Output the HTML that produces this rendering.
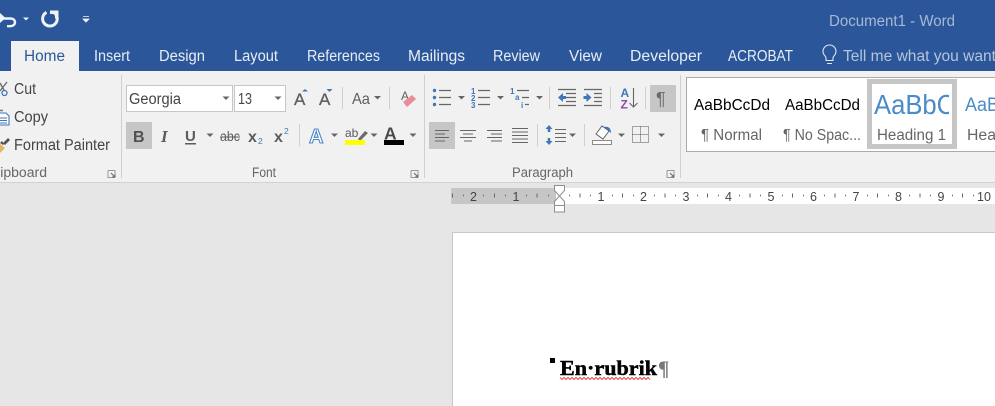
<!DOCTYPE html>
<html><head><meta charset="utf-8"><style>
html,body{margin:0;padding:0;width:995px;height:406px;overflow:hidden;background:#e6e6e6}
svg{display:block;font-family:"Liberation Sans",sans-serif}
.tab{font-size:15.500px;fill:#e8edf5}
.r{font-size:15.500px;fill:#444}
.g{font-size:13.500px;fill:#666}
.n{font-size:12.500px;fill:#444}
.s{font-size:15.500px;fill:#666}
</style></head><body>
<svg width="995" height="406" viewBox="0 0 995 406" xmlns="http://www.w3.org/2000/svg">
<defs>
<clipPath id="hc"><rect x="872" y="84" width="77" height="40"/></clipPath>
<path id="caret" d="M0 0h7l-3.500 3.500z" fill="#666"/>
</defs>
<!-- title bar -->
<rect width="995" height="71" fill="#2b579a"/>
<path d="M0 13v10l5.500-5z" fill="#f0f3f8"/>
<path d="M3 18.500h7c3.500 0 5 1.800 5 3.800s-1.700 3.900-5 3.900H7" fill="none" stroke="#f0f3f8" stroke-width="2.400"/>
<path d="M23 17.500h6l-3 3z" fill="#f0f3f8"/>
<path d="M46.500 12.300a7.300 7.300 0 1 0 7.800 .6" fill="none" stroke="#f0f3f8" stroke-width="3"/>
<path d="M50 10.500h8.500v8h-3.500v-4.500h-5z" fill="#f0f3f8"/>
<path d="M83 16.500h6M83 19h6l-3 3z" fill="#f0f3f8" stroke="#f0f3f8" stroke-width=".8"/>
<text x="829" y="26" font-size="15.500" fill="#a5b8d5" textLength="126" lengthAdjust="spacingAndGlyphs">Document1 - Word</text>
<!-- tabs -->
<rect x="11" y="41" width="68" height="30" fill="#f1f1f1"/>
<text x="24" y="61" font-size="15.500" fill="#2b579a" textLength="41" lengthAdjust="spacingAndGlyphs">Home</text>
<text class="tab" x="94" y="61" textLength="36" lengthAdjust="spacingAndGlyphs">Insert</text>
<text class="tab" x="159" y="61" textLength="46" lengthAdjust="spacingAndGlyphs">Design</text>
<text class="tab" x="234" y="61" textLength="44" lengthAdjust="spacingAndGlyphs">Layout</text>
<text class="tab" x="307" y="61" textLength="73" lengthAdjust="spacingAndGlyphs">References</text>
<text class="tab" x="408" y="61" textLength="57" lengthAdjust="spacingAndGlyphs">Mailings</text>
<text class="tab" x="493" y="61" textLength="47" lengthAdjust="spacingAndGlyphs">Review</text>
<text class="tab" x="569" y="61" textLength="33" lengthAdjust="spacingAndGlyphs">View</text>
<text class="tab" x="630" y="61" textLength="72" lengthAdjust="spacingAndGlyphs">Developer</text>
<text class="tab" x="728" y="61" textLength="65" lengthAdjust="spacingAndGlyphs">ACROBAT</text>
<path d="M826 60.500v-2.500c0-2-3-3-3-6.500a6.500 6.500 0 0 1 13 0c0 3.500-3 4.500-3 6.500v2.500zM827 63.500h5" fill="none" stroke="#dfe6f0" stroke-width="1.100"/>
<text x="843" y="61" font-size="15.500" fill="#b4c4dc" textLength="153" lengthAdjust="spacingAndGlyphs">Tell me what you want</text>
<!-- ribbon -->
<rect y="71" width="995" height="111" fill="#f1f1f1"/>
<rect y="182" width="995" height="1" fill="#d2d2d2"/>
<rect x="121" y="75" width="1" height="103" fill="#cfcfcf"/>
<rect x="424" y="75" width="1" height="103" fill="#cfcfcf"/>
<rect x="680" y="75" width="1" height="103" fill="#cfcfcf"/>
<!-- clipboard -->
<path d="M0 83l4.500 8M7 82l-7 9" stroke="#666" stroke-width="1.300" fill="none"/>
<circle cx="4.500" cy="93" r="2.500" fill="none" stroke="#3f77b8" stroke-width="1.300"/>
<text class="r" x="14" y="94" textLength="22" lengthAdjust="spacingAndGlyphs">Cut</text>
<path d="M0 113h6l3 3v9H0" fill="#fff" stroke="#3f77b8" stroke-width="1.100"/>
<path d="M0 118h7M0 120.500h7M0 123h7" stroke="#3f77b8" stroke-width="1"/>
<path d="M0 110.500h3" stroke="#777" stroke-width="1.500"/>
<text class="r" x="14" y="122" textLength="34" lengthAdjust="spacingAndGlyphs">Copy</text>
<path d="M0 144l5 4-5 5z" fill="#e4b461"/>
<path d="M0 143l2-2 2 3-1 1zM3 143l5-5 2 2-5 5z" fill="#555"/>
<text class="r" x="14" y="150" textLength="96" lengthAdjust="spacingAndGlyphs">Format Painter</text>
<text class="g" x="-13" y="177" textLength="60" lengthAdjust="spacingAndGlyphs">Clipboard</text>
<g id="launch"><path d="M108 170.500h7v7M108 170.500v7h7" fill="none" stroke="#999"/><path d="M111 173l3.500 3.500M112 177h3v-3" stroke="#666" fill="none"/></g>
<!-- font -->
<rect x="126.500" y="85.500" width="106" height="26" fill="#fff" stroke="#c6c6c6"/>
<rect x="234.500" y="85.500" width="51" height="26" fill="#fff" stroke="#c6c6c6"/>
<text x="129" y="104" font-size="15.500" fill="#444" textLength="52" lengthAdjust="spacingAndGlyphs">Georgia</text>
<text x="238" y="104" font-size="15.500" fill="#444" textLength="14" lengthAdjust="spacingAndGlyphs">13</text>
<use href="#caret" x="222.500" y="96.500"/><use href="#caret" x="274.500" y="96.500"/>
<text x="294" y="105" font-size="17" fill="#5f5f5f" stroke="#5f5f5f" stroke-width=".3">A</text>
<path d="M302 91.500h6l-3-2.500z" fill="#3f77b8"/>
<text x="319" y="105" font-size="17" fill="#5f5f5f" stroke="#5f5f5f" stroke-width=".3">A</text>
<path d="M326.500 89h6l-3 3z" fill="#3f77b8"/>
<rect x="342" y="87" width="1" height="22" fill="#cfcfcf"/>
<text x="352" y="104" font-size="16" fill="#5f5f5f" textLength="18" lengthAdjust="spacingAndGlyphs">Aa</text>
<use href="#caret" x="374" y="96"/>
<rect x="389" y="87" width="1" height="22" fill="#cfcfcf"/>
<text x="401" y="100" font-size="12" fill="#5f5f5f">A</text>
<path d="M403 102l9-7 4 4-9 8z" fill="#ec8a98"/>
<rect x="126" y="122" width="26" height="27" fill="#c6c6c6"/>
<text x="133" y="142" font-size="16" font-weight="700" fill="#505050">B</text>
<text x="161" y="142" font-size="17" font-weight="700" font-style="italic" font-family="Liberation Serif" fill="#5c5c5c">I</text>
<text x="185" y="141" font-size="15" font-weight="700" fill="#5c5c5c">U</text>
<rect x="185" y="143" width="11" height="1.500" fill="#5c5c5c"/>
<use href="#caret" x="206.500" y="133.500"/>
<text x="220" y="141" font-size="13.500" fill="#5c5c5c" textLength="20" lengthAdjust="spacingAndGlyphs">abc</text>
<rect x="220" y="136.500" width="20" height="1" fill="#5c5c5c"/>
<text x="248" y="142" font-size="16" font-weight="700" fill="#5c5c5c">x</text>
<text x="258" y="144" font-size="8.500" fill="#3f77b8">2</text>
<text x="274" y="142" font-size="16" font-weight="700" fill="#5c5c5c">x</text>
<text x="284" y="134" font-size="8.500" fill="#3f77b8">2</text>
<rect x="299" y="124" width="1" height="22" fill="#cfcfcf"/>
<text x="309" y="143" font-size="20" font-weight="700" fill="#fff" stroke="#4a86c8" stroke-width="1.100">A</text>
<use href="#caret" x="331" y="133.500"/>
<text x="345" y="137" font-size="12" fill="#5a5a5a">ab</text>
<path d="M358 139l7-8 3 2-8 8z" fill="#6a6a6a"/>
<rect x="345" y="140" width="20" height="5" fill="#ff0"/>
<use href="#caret" x="370.500" y="133.500"/>
<text x="384" y="139.500" font-size="17.500" font-weight="700" fill="#4a4a4a">A</text>
<rect x="384" y="140" width="20" height="5" fill="#000"/>
<use href="#caret" x="409.500" y="133.500"/>
<text class="g" x="252" y="177" textLength="24" lengthAdjust="spacingAndGlyphs">Font</text>
<use href="#launch" x="303"/>
<!-- paragraph row 1 -->
<g fill="#3f77b8"><circle cx="434.500" cy="90.500" r="1.700"/><circle cx="434.500" cy="97.500" r="1.700"/><circle cx="434.500" cy="104.500" r="1.700"/></g>
<path d="M439 90.500h12M439 97.500h12M439 104.500h12M478 90.500h12M478 97.500h12M478 104.500h12M517 90.500h12M522 97.500h7M525 104.500h4" stroke="#666" stroke-width="1.200"/>
<use href="#caret" x="458" y="96"/><use href="#caret" x="497" y="96"/><use href="#caret" x="536" y="96"/>
<g font-size="8" font-weight="700" fill="#3f77b8"><text x="471" y="94">1</text><text x="471" y="101">2</text><text x="471" y="108">3</text><text x="510" y="94">1</text><text x="515" y="100">a</text><text x="521" y="108">i</text></g>
<rect x="549" y="87" width="1" height="22" fill="#cfcfcf"/>
<path d="M558 89.500h18M566 93.500h10M566 97.500h10M566 101.500h10M558 105.500h18M584 89.500h18M594 93.500h8M594 97.500h8M594 101.500h8M584 105.500h18" stroke="#666" stroke-width="1.200"/>
<path d="M558 97.500l5-4.500v3h3v3h-3v3zM591.500 97.500l-5-4.500v3h-3v3h3v3z" fill="#3f77b8"/>
<rect x="610" y="87" width="1" height="22" fill="#cfcfcf"/>
<text x="620.500" y="97" font-size="12" font-weight="700" fill="#3f77b8">A</text>
<text x="620.500" y="108.500" font-size="12" font-weight="700" fill="#8a4fa8">Z</text>
<path d="M633.500 88v19M629.500 103l4 4 4-4" fill="none" stroke="#666" stroke-width="1.100"/>
<rect x="645" y="87" width="1" height="22" fill="#cfcfcf"/>
<rect x="650" y="85" width="26" height="27" fill="#c6c6c6"/>
<text x="656" y="105" font-size="18" fill="#6a6a6a">¶</text>
<!-- paragraph row 2 -->
<rect x="429" y="122" width="26" height="27" fill="#c6c6c6"/>
<path d="M435 130.500h14M435 134h10M435 137.500h14M435 141h10M460 130.500h16M463 134h10M460 137.500h16M464 141h8M487 130.500h15M491 134h11M487 137.500h15M491 141h11M512 128.500h16M512 132h16M512 135.500h16M512 139h16M512 142.500h16" stroke="#666" stroke-width="1.100"/>
<rect x="537" y="124" width="1" height="22" fill="#cfcfcf"/>
<path d="M549 125l-3.500 4h7zM549 145l-3.500-4h7z" fill="#3f77b8"/>
<path d="M549 128v4M549 138v4" stroke="#3f77b8" stroke-width="2.500"/>
<path d="M555 129.500h11M555 133.500h11M555 137.500h11M555 141.500h11" stroke="#666" stroke-width="1.100"/>
<use href="#caret" x="569" y="133.500"/>
<rect x="584" y="124" width="1" height="22" fill="#cfcfcf"/>
<path d="M596 134l6-8 7 5-6 8z" fill="#fff" stroke="#666" stroke-width="1"/>
<path d="M604 127c4-1 7 1 7 6z" fill="#3f77b8"/>
<rect x="592.500" y="140.500" width="19" height="4" fill="#fff" stroke="#8a8a8a"/>
<use href="#caret" x="618" y="133.500"/>
<path d="M632.500 126.500h16v16h-16zM632.500 134.500h16M640.500 126.500v16" fill="none" stroke="#555" stroke-dasharray="1 1"/>
<use href="#caret" x="658" y="133.500"/>
<text class="g" x="512" y="177" textLength="61" lengthAdjust="spacingAndGlyphs">Paragraph</text>
<use href="#launch" x="559"/>
<!-- styles -->
<rect x="686.500" y="77.500" width="320" height="74" fill="#fff" stroke="#ababab"/>
<rect x="869.500" y="81.500" width="85" height="65" fill="#fff" stroke="#c6c6c6" stroke-width="5"/>
<text x="694" y="110" font-size="15.500" fill="#000" textLength="76" lengthAdjust="spacingAndGlyphs">AaBbCcDd</text>
<text x="785" y="110" font-size="15.500" fill="#000" textLength="75" lengthAdjust="spacingAndGlyphs">AaBbCcDd</text>
<g clip-path="url(#hc)"><text x="874" y="114" font-size="28" fill="#4a8bc8" textLength="94" lengthAdjust="spacingAndGlyphs">AaBbCc</text></g>
<text x="965" y="111" font-size="19" fill="#4a8bc8" textLength="34" lengthAdjust="spacingAndGlyphs">AaB</text>
<text class="s" x="701" y="140" textLength="61" lengthAdjust="spacingAndGlyphs">¶ Normal</text>
<text class="s" x="783" y="140" textLength="78" lengthAdjust="spacingAndGlyphs">¶ No Spac...</text>
<text class="s" x="877" y="140" textLength="69" lengthAdjust="spacingAndGlyphs">Heading 1</text>
<text class="s" x="967" y="140" textLength="29" lengthAdjust="spacingAndGlyphs">Hea</text>
<!-- ruler -->
<rect x="451" y="188" width="105" height="16" fill="#c6c6c6"/>
<rect x="556" y="188" width="439" height="16" fill="#fff"/>
<g text-anchor="middle">
<text class="n" x="473.500" y="201">2</text><text class="n" x="516" y="201">1</text><text class="n" x="601" y="201">1</text><text class="n" x="643.500" y="201">2</text><text class="n" x="686" y="201">3</text><text class="n" x="728.500" y="201">4</text><text class="n" x="771" y="201">5</text><text class="n" x="813.500" y="201">6</text><text class="n" x="856" y="201">7</text><text class="n" x="898.500" y="201">8</text><text class="n" x="941" y="201">9</text><text class="n" x="984" y="201">10</text>
</g>
<path d="M452.500 193.500v4M494.500 193.500v4M537 193.500v4M580 193.500v4M622.500 193.500v4M665 193.500v4M707.500 193.500v4M750 193.500v4M792.500 193.500v4M835 193.500v4M877.500 193.500v4M920 193.500v4M962.500 193.500v4" stroke="#666"/>
<path d="M463 195.500h1M483 195.500h1M505 195.500h1M526 195.500h1M548 195.500h1M569 195.500h1M590 195.500h1M612 195.500h1M633 195.500h1M654 195.500h1M675 195.500h1M697 195.500h1M718 195.500h1M739 195.500h1M760 195.500h1M782 195.500h1M803 195.500h1M824 195.500h1M845 195.500h1M867 195.500h1M888 195.500h1M909 195.500h1M930 195.500h1M952 195.500h1M973 195.500h1" stroke="#666" stroke-width="1.500"/>
<path d="M554.500 185.500h10v5l-5 5.500 5 5.500v4h-10v-4l5-5.500-5-5.500z" fill="#fff" stroke="#8f8f8f"/>
<rect x="554.500" y="205.500" width="10" height="6.500" fill="#fff" stroke="#8f8f8f"/>
<!-- page -->
<rect x="452.500" y="232.500" width="560" height="190" fill="#fff" stroke="#c6c6c6"/>
<rect x="550" y="358" width="5" height="5" fill="#000"/>
<text x="560" y="375" font-family="Liberation Serif" font-size="21" font-weight="700" fill="#000" stroke="#000" stroke-width=".45" textLength="97" lengthAdjust="spacingAndGlyphs">En·rubrik</text>
<text x="658" y="375.500" font-family="Liberation Serif" font-size="21" font-weight="700" fill="#777">¶</text>
<path d="M560 377.500l2 2 2-2 2 2 2-2 2 2 2-2 2 2 2-2 2 2 2-2 2 2 2-2 2 2 2-2 2 2 2-2 2 2 2-2 2 2 2-2 2 2 2-2 2 2 2-2 2 2 2-2 2 2 2-2 2 2 2-2 2 2 2-2 2 2 2-2 2 2 2-2 2 2 2-2 2 2 2-2 2 2 2-2 2 2 2-2 2 2" fill="none" stroke="#e8474c" stroke-width="1"/>
</svg>
</body></html>
